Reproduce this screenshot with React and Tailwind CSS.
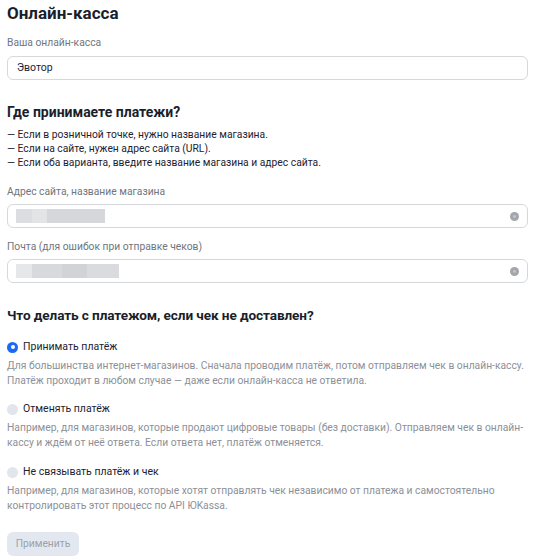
import React from "react";

function ClearIcon() {
  return (
    <svg width="9" height="9" viewBox="0 0 10 10" className="shrink-0">
      <circle cx="5" cy="5" r="5" fill="#a3a6ab" />
      <circle cx="5" cy="5" r="1.6" fill="#c4c6ca" />
    </svg>
  );
}

function Radio({ checked, label }) {
  return (
    <div className="flex items-center gap-[5px] h-[14px]">
      {checked ? (
        <span className="w-[11px] h-[11px] rounded-full bg-[#1d6af2] flex items-center justify-center">
          <span className="w-[4px] h-[4px] rounded-full bg-white" />
        </span>
      ) : (
        <span className="w-[11px] h-[11px] rounded-full bg-[#e1e5ec]" />
      )}
      <span className="text-[10.5px] leading-[14px] text-[#1d2230]">{label}</span>
    </div>
  );
}

export default function App() {
  return (
    <div
      className="w-[533px] h-[559px] bg-white px-[7px] pt-[2px] overflow-hidden"
      style={{ fontFamily: "Roboto, 'Noto Sans', sans-serif" }}
    >
      <h1 className="text-[17px] leading-[22px] font-bold text-[#1a1f2b]">Онлайн-касса</h1>

      <div className="mt-[12px] text-[10.3px] leading-[14px] text-[#70757e]">Ваша онлайн-касса</div>
      <div className="mt-[6px] h-[24px] w-[521px] border border-[#d6d8dc] rounded-[6px] flex items-center px-[9px] text-[10.5px] text-[#1d2230]">
        Эвотор
      </div>

      <h2 className="mt-[22px] text-[14px] leading-[20px] font-bold text-[#1a1f2b]">Где принимаете платежи?</h2>
      <div className="mt-[6px] text-[10.3px] leading-[14px] text-[#1d2230]">
        <div>— Если в розничной точке, нужно название магазина.</div>
        <div>— Если на сайте, нужен адрес сайта (URL).</div>
        <div>— Если оба варианта, введите название магазина и адрес сайта.</div>
      </div>

      <div className="mt-[15px] text-[10.3px] leading-[14px] text-[#70757e]">Адрес сайта, название магазина</div>
      <div className="mt-[5px] h-[24px] w-[521px] border border-[#d6d8dc] rounded-[6px] flex items-center justify-between pl-[8px] pr-[8px]">
        <div className="flex h-[14px]">
          <span className="w-[16px] bg-[#dcdde0]" />
          <span className="w-[15px] bg-[#e3e4e6]" />
          <span className="w-[58px] bg-[#d6d7da]" />
        </div>
        <ClearIcon />
      </div>

      <div className="mt-[12px] text-[10.3px] leading-[14px] text-[#70757e]">Почта (для ошибок при отправке чеков)</div>
      <div className="mt-[5px] h-[24px] w-[521px] border border-[#d6d8dc] rounded-[6px] flex items-center justify-between pl-[8px] pr-[8px]">
        <div className="flex h-[14px]">
          <span className="w-[16px] bg-[#e6e7e9]" />
          <span className="w-[30px] bg-[#d8d9dc]" />
          <span className="w-[25px] bg-[#d2d3d6]" />
          <span className="w-[32px] bg-[#dadbde]" />
        </div>
        <ClearIcon />
      </div>

      <h2 className="mt-[22px] text-[13.6px] leading-[20px] font-bold text-[#1a1f2b] tracking-[-0.1px]">
        Что делать с платежом, если чек не доставлен?
      </h2>

      <div className="mt-[15px]">
        <Radio checked label="Принимать платёж" />
        <p className="mt-[4px] text-[10.3px] leading-[15px] text-[#8c9099] whitespace-nowrap">
          Для большинства интернет-магазинов. Сначала проводим платёж, потом отправляем чек в онлайн-кассу.
          <br />
          Платёж проходит в любом случае — даже если онлайн-касса не ответила.
        </p>
      </div>

      <div className="mt-[14px]">
        <Radio label="Отменять платёж" />
        <p className="mt-[4px] text-[10.3px] leading-[15px] text-[#8c9099] whitespace-nowrap">
          Например, для магазинов, которые продают цифровые товары (без доставки). Отправляем чек в онлайн-
          <br />
          кассу и ждём от неё ответа. Если ответа нет, платёж отменяется.
        </p>
      </div>

      <div className="mt-[15px]">
        <Radio label="Не связывать платёж и чек" />
        <p className="mt-[4px] text-[10.3px] leading-[15px] text-[#8c9099] whitespace-nowrap">
          Например, для магазинов, которые хотят отправлять чек независимо от платежа и самостоятельно
          <br />
          контролировать этот процесс по API ЮKassa.
        </p>
      </div>

      <button className="mt-[19px] h-[24px] w-[72px] rounded-[6px] bg-[#e3e8f0] text-[10.3px] text-[#9ba1ab]">
        Применить
      </button>
    </div>
  );
}
